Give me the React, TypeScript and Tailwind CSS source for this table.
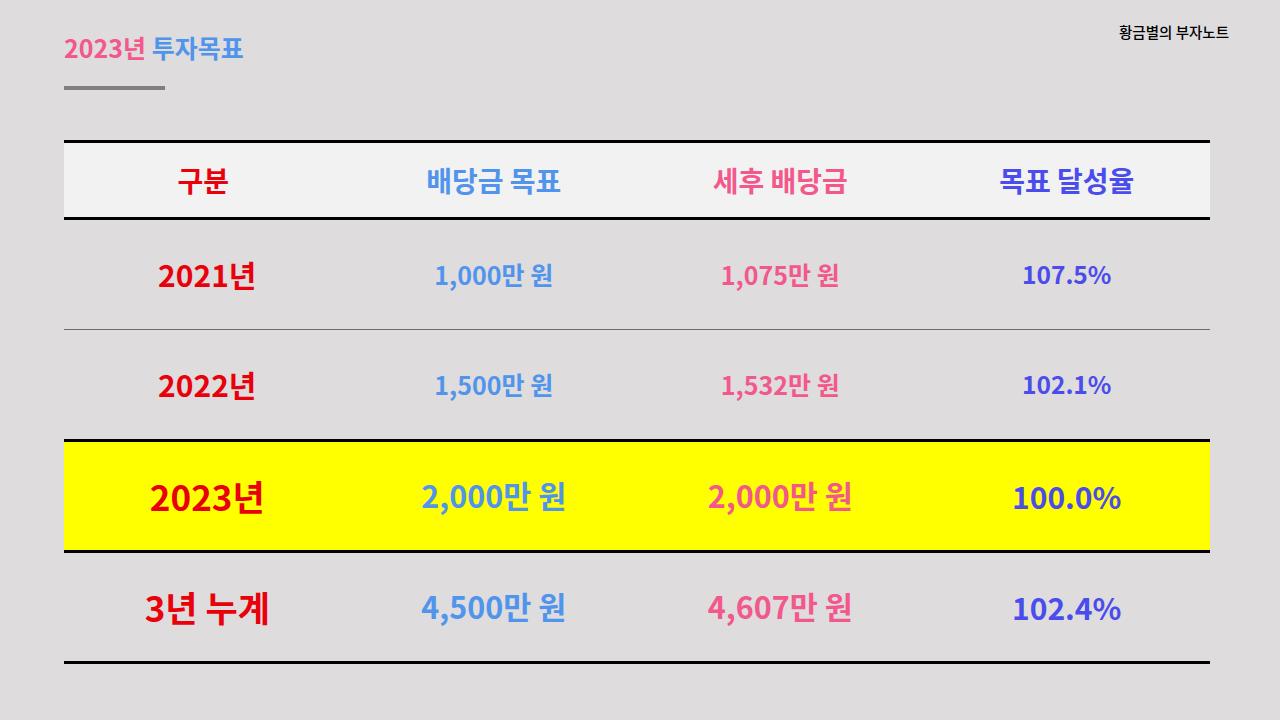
const rows = [
  { label: "2021년", goal: "1,000만 원", after: "1,075만 원", rate: "107.5%", big: false, line: "thin" },
  { label: "2022년", goal: "1,500만 원", after: "1,532만 원", rate: "102.1%", big: false, line: "thick" },
  { label: "2023년", goal: "2,000만 원", after: "2,000만 원", rate: "100.0%", big: true, line: "thick", hi: true },
  { label: "3년 누계", goal: "4,500만 원", after: "4,607만 원", rate: "102.4%", big: true, line: "thick" },
];

export default function App() {
  return (
    <div
      className="relative h-[720px] w-[1280px] bg-[#dedcdd] px-16 pt-[32px]"
      style={{ fontFamily: '"Noto Sans CJK KR", "Noto Sans", sans-serif' }}
    >
      <div className="absolute right-[51px] top-[21px] text-[14.5px] font-medium text-black">황금별의 부자노트</div>

      <div className="text-[25px] font-bold leading-[30px]">
        <span className="text-[#f2588b]">2023년</span> <span className="text-[#5094ec]">투자목표</span>
      </div>
      <div className="mt-[24px] h-[4px] w-[101px] bg-[#7f7f7f]" />

      <div className="mt-[50px] w-[1146px] border-t-[3px] border-black">
        <div className="grid h-[74px] grid-cols-4 items-center bg-[#f2f2f2] text-center text-[28px] font-bold">
          <div className="pr-2 text-[#e8000b]">구분</div>
          <div className="text-[#5094ec]">배당금 목표</div>
          <div className="text-[#f2588b]">세후 배당금</div>
          <div className="text-[#4a4ceb]">목표 달성율</div>
        </div>
        <div className="h-[3px] bg-black" />
        {rows.map((r) => (
          <div key={r.label}>
            <div
              className={`grid grid-cols-4 items-center text-center font-bold ${r.hi ? "h-[108px] bg-[#ffff00]" : r.big ? "h-[108px]" : "h-[109px]"}`}
            >
              <div className={`text-[#e8000b] ${r.big ? "text-[35px]" : "text-[30px]"}`}>{r.label}</div>
              <div className={`text-[#5094ec] ${r.big ? "text-[30.5px]" : "text-[25px]"}`}>{r.goal}</div>
              <div className={`text-[#f2588b] ${r.big ? "text-[30.5px]" : "text-[25px]"}`}>{r.after}</div>
              <div className={`text-[#4a4ceb] ${r.big ? "text-[30px]" : "text-[24.5px]"}`}>{r.rate}</div>
            </div>
            {r.line === "thin" ? <div className="h-px bg-[#6b6b6b]" /> : <div className="h-[3px] bg-black" />}
          </div>
        ))}
      </div>
    </div>
  );
}
